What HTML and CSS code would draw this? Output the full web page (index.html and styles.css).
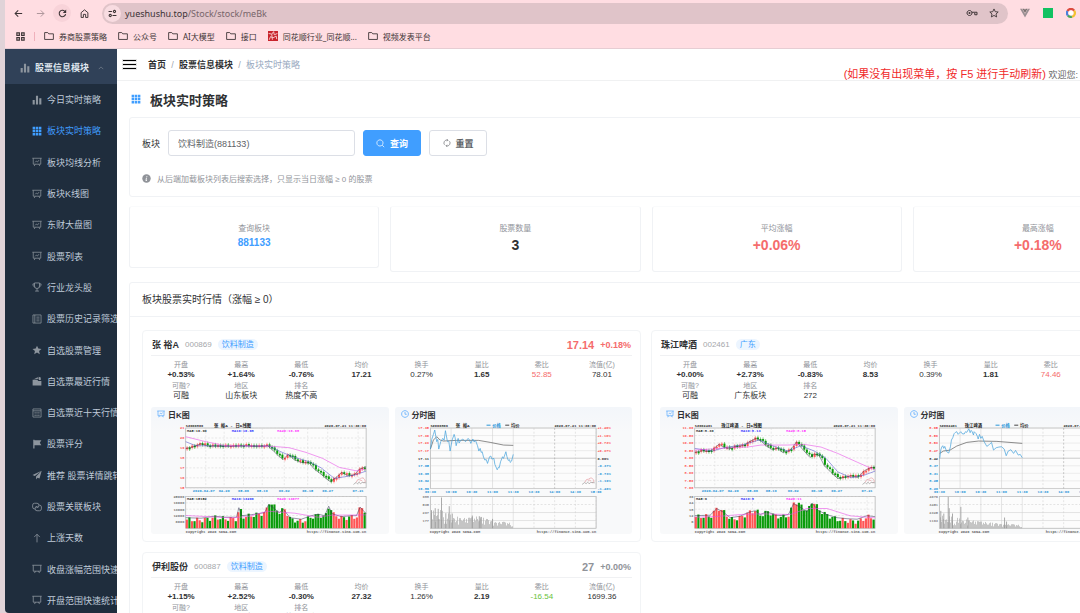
FILE: index.html
```html
<!DOCTYPE html>
<html lang="zh-CN">
<head>
    <meta charset="UTF-8">
    <meta name="viewport" content="width=device-width, initial-scale=1.0">
    <title>板块实时策略</title>
    <link rel="stylesheet" href="styles.css">
</head>
<body>
    <!-- 图标库 -->
    <svg class="sprite" aria-hidden="true">
        <symbol id="i-folder" viewBox="0 0 16 16"><path d="M1 13.500V2.500h5l1.600 2H15v9z" fill="none" stroke="currentColor" stroke-width="1.400" stroke-linejoin="round"/></symbol>
        <symbol id="i-bars" viewBox="0 0 16 16"><path d="M1 8h3.400v7H1zM6.300 1h3.400v14H6.300zM11.600 5H15v10h-3.400z" fill="currentColor"/></symbol>
        <symbol id="i-grid" viewBox="0 0 16 16"><path d="M1 1h4v4H1zM6 1h4v4H6zM11 1h4v4h-4zM1 6h4v4H1zM6 6h4v4H6zM11 6h4v4h-4zM1 11h4v4H1zM6 11h4v4H6zM11 11h4v4h-4z" fill="currentColor"/></symbol>
        <symbol id="i-board" viewBox="0 0 16 16"><path d="M.5 2h15M2 2v9.500h12V2M5 11.500l-1.500 3M11 11.500l1.500 3M5 8.500l2-2 1.700 1.500 2.500-3" fill="none" stroke="currentColor" stroke-width="1.200"/></symbol>
        <symbol id="i-plain" viewBox="0 0 16 16"><path d="M.5 2h15M2 2v9.500h12V2M5.500 11.500l-1.500 3M10.500 11.500l1.500 3" fill="none" stroke="currentColor" stroke-width="1.300"/></symbol>
        <symbol id="i-cup" viewBox="0 0 16 16"><path d="M4 1.500h8v5a4 4 0 0 1-8 0zM4 3H1.500c0 3 .8 4.500 3 5M12 3h2.500c0 3-.8 4.500-3 5M8 10.500v4M5 14.500h6" fill="none" stroke="currentColor" stroke-width="1.300"/></symbol>
        <symbol id="i-note" viewBox="0 0 16 16"><path d="M1.500 1.500h13v13h-13zM4.500 1.500v13M7 5h5M7 8h5M7 11h5" fill="none" stroke="currentColor" stroke-width="1.200"/></symbol>
        <symbol id="i-star" viewBox="0 0 16 16"><path d="M8 1l2.100 4.700 5.100.5-3.900 3.400 1.200 5L8 12l-4.500 2.600 1.200-5L.8 6.200l5.100-.5z" fill="currentColor"/></symbol>
        <symbol id="i-wallet" viewBox="0 0 16 16"><path d="M1 6h7.500L10 8h5v7H1zM3 5l6-3 1.500 2.500M10.500 1l3.500 1.500v4h-3z" fill="currentColor"/></symbol>
        <symbol id="i-date" viewBox="0 0 16 16"><path d="M1.500 1.500h13v13h-13zM1.500 4.500h13M4 7h2M7 7h2M10 7h2M4 9.500h2M7 9.500h2M10 9.500h2M4 12h2M7 12h2M10 12h2" fill="none" stroke="currentColor" stroke-width="1.200"/></symbol>
        <symbol id="i-flag" viewBox="0 0 16 16"><path d="M2 1h2v14H2zM4 2h11l-2.500 4L15 10H4z" fill="currentColor"/></symbol>
        <symbol id="i-send" viewBox="0 0 16 16"><path d="M15.500 1L.8 8l3.700 1.700zM15.500 1l-9 9.500V15l2.200-2.600 3.300 1.300z" fill="currentColor"/></symbol>
        <symbol id="i-link" viewBox="0 0 16 16"><path d="M5 11H4a3 3 0 0 1-3-3V5a3 3 0 0 1 3-3h4a3 3 0 0 1 3 3v1a3 3 0 0 1-3 3H7M11 5h1a3 3 0 0 1 3 3v3a3 3 0 0 1-3 3H8a3 3 0 0 1-3-3v-1a3 3 0 0 1 3-3h1" fill="none" stroke="currentColor" stroke-width="1.300"/></symbol>
        <symbol id="i-up" viewBox="0 0 16 16"><path d="M8 15V2M3.500 6.500L8 2l4.500 4.500" fill="none" stroke="currentColor" stroke-width="1.300"/></symbol>
        <symbol id="i-clock" viewBox="0 0 16 16"><path d="M8 1.200a6.800 6.800 0 1 0 .01 0zM8 4v4.500h3.500" fill="none" stroke="currentColor" stroke-width="1.300"/></symbol>
    </svg>

    <!-- 浏览器顶栏 -->
    <header class="browser">
        <div class="toolbar">
            <button class="nav-btn" aria-label="后退"><svg viewBox="0 0 16 16"><path d="M14.500 8H2M7.500 2.500L2 8l5.500 5.500" fill="none" stroke="currentColor" stroke-width="1.800"/></svg></button>
            <button class="nav-btn faded" aria-label="前进"><svg viewBox="0 0 16 16"><path d="M1.500 8H14M8.500 2.500L14 8l-5.500 5.500" fill="none" stroke="currentColor" stroke-width="1.600"/></svg></button>
            <button class="nav-btn round" aria-label="刷新"><svg viewBox="0 0 16 16"><path d="M13.500 9A5.700 5.700 0 1 1 12 4l1.500 1.500" fill="none" stroke="currentColor" stroke-width="1.900"/><path d="M14.500 1v6h-6z" fill="currentColor"/></svg></button>
            <button class="nav-btn" aria-label="主页"><svg viewBox="0 0 16 16"><path d="M2 15V6.500L8 1.500l6 5V15h-4V9.500H6V15z" fill="none" stroke="currentColor" stroke-width="1.700"/></svg></button>
            <div class="address">
                <span class="site-info"><svg viewBox="0 0 16 16"><path d="M1 4.500h6M8 11.500h7M11.500 2.500a2 2 0 1 0 .01 0zM4 9.500a2 2 0 1 0 .01 0z" fill="none" stroke="currentColor" stroke-width="1.900"/></svg></span>
                <span class="url">yueshushu.top<em>/Stock/stock/meBk</em></span>
                <svg class="key" viewBox="0 0 24 16"><path d="M7 3a5 5 0 1 0 .01 0zM12 6.500h10v5h-4.500V8" fill="none" stroke="currentColor" stroke-width="2"/><circle cx="7" cy="8" r="2" fill="currentColor"/></svg>
                <svg viewBox="0 0 16 16"><path d="M8 1.500l2 4.400 4.700.5-3.500 3.200 1 4.700L8 11.900l-4.200 2.400 1-4.700L1.300 6.400 6 5.900z" fill="none" stroke="currentColor" stroke-width="1.400"/></svg>
            </div>
            <div class="extensions">
                <svg viewBox="0 0 16 16"><path d="M0 1h3.500L8 9l4.500-8H16L8 15z" fill="#9b9093"/><path d="M4 1h3l1 2 1-2h3L8 8z" fill="#77706f"/></svg>
                <span class="ext-green"></span>
                <svg viewBox="0 0 16 16" fill="none" stroke-width="3.500"><path d="M2.300 4.800A6.200 6.200 0 0 1 13 4.200" stroke="#dc4b3e"/><path d="M13 4.200A6.200 6.200 0 0 1 9.500 14" stroke="#f2c230"/><path d="M9.500 14A6.200 6.200 0 0 1 3 12" stroke="#49a75a"/><path d="M3 12a6.200 6.200 0 0 1-.7-7.200" stroke="#4a80dc"/><circle cx="8" cy="8" r="3.600" fill="#fff"/></svg>
            </div>
        </div>
        <nav class="bookmarks">
            <svg class="apps" viewBox="0 0 16 16"><path d="M1.500 1.500h4.500v4.500H1.500zM10 1.500h4.500v4.500H10zM1.500 10h4.500v4.500H1.500zM10 10h4.500v4.500H10z" fill="none" stroke="currentColor" stroke-width="2"/></svg>
            <span class="divider"></span>
            <a href="#"><svg><use href="#i-folder"/></svg>券商股票策略</a>
            <a href="#"><svg><use href="#i-folder"/></svg>公众号</a>
            <a href="#"><svg><use href="#i-folder"/></svg>AI大模型</a>
            <a href="#"><svg><use href="#i-folder"/></svg>接口</a>
            <a href="#"><svg viewBox="0 0 16 16"><rect width="16" height="16" fill="#c9242c"/><path d="M1 4l5 1 3-4 1 5 5-2M2 14l2-5 4 2 5-3 1 5M6 5l1 9" fill="none" stroke="#f6cfd0" stroke-width="1.500"/></svg>同花顺行业_同花顺...</a>
            <a href="#"><svg><use href="#i-folder"/></svg>视频发表平台</a>
        </nav>
    </header>

    <div class="app">
        <!-- 侧边菜单 -->
        <aside class="sidebar">
            <button class="menu-title">
                <svg><use href="#i-bars"/></svg><span>股票信息模块</span>
                <svg class="arrow" viewBox="0 0 16 16"><path d="M2 11l6-6 6 6" fill="none" stroke="currentColor" stroke-width="1.500"/></svg>
            </button>
            <ul class="submenu">
                <li><a href="#"><svg><use href="#i-bars"/></svg>今日实时策略</a></li>
                <li><a href="#" class="active"><svg><use href="#i-grid"/></svg>板块实时策略</a></li>
                <li><a href="#"><svg><use href="#i-board"/></svg>板块均线分析</a></li>
                <li><a href="#"><svg><use href="#i-board"/></svg>板块K线图</a></li>
                <li><a href="#"><svg><use href="#i-board"/></svg>东财大盘图</a></li>
                <li><a href="#"><svg><use href="#i-board"/></svg>股票列表</a></li>
                <li><a href="#"><svg><use href="#i-cup"/></svg>行业龙头股</a></li>
                <li><a href="#"><svg><use href="#i-note"/></svg>股票历史记录筛选</a></li>
                <li><a href="#"><svg><use href="#i-star"/></svg>自选股票管理</a></li>
                <li><a href="#"><svg><use href="#i-wallet"/></svg>自选票最近行情</a></li>
                <li><a href="#"><svg><use href="#i-date"/></svg>自选票近十天行情</a></li>
                <li><a href="#"><svg><use href="#i-flag"/></svg>股票评分</a></li>
                <li><a href="#"><svg><use href="#i-send"/></svg>推荐 股票详情跳转</a></li>
                <li><a href="#"><svg><use href="#i-link"/></svg>股票关联板块</a></li>
                <li><a href="#"><svg><use href="#i-up"/></svg>上涨天数</a></li>
                <li><a href="#"><svg><use href="#i-plain"/></svg>收盘涨幅范围快速</a></li>
                <li><a href="#"><svg><use href="#i-plain"/></svg>开盘范围快速统计</a></li>
            </ul>
        </aside>

        <main class="main">
            <div class="navbar">
                <button class="hamburger" aria-label="折叠菜单"><i></i><i></i><i></i></button>
                <nav class="breadcrumb">
                    <a href="#">首页</a><span>/</span><a href="#">股票信息模块</a><span>/</span><em>板块实时策略</em>
                </nav>
                <div class="notice"><strong>(如果没有出现菜单，按 F5 进行手动刷新)</strong> 欢迎您:</div>
            </div>

            <div class="content">
                <h1 class="page-title"><svg><use href="#i-grid"/></svg>板块实时策略</h1>

                <!-- 查询条件 -->
                <section class="panel search">
                    <form class="search-row">
                        <label for="plate">板块</label>
                        <input id="plate" type="text" value="饮料制造(881133)">
                        <button type="button" class="btn primary"><svg viewBox="0 0 16 16"><path d="M7 1.500a5.500 5.500 0 1 0 .01 0zM11 11l3.500 3.500" fill="none" stroke="currentColor" stroke-width="1.300"/></svg>查询</button>
                        <button type="button" class="btn"><svg viewBox="0 0 16 16"><path d="M3 11.500A6 6 0 0 1 8 2l2 .5M13 4.500A6 6 0 0 1 8 14l-2-.5M8 .5L10 2.500 8 4.500M8 11.500l-2 2 2 2" fill="none" stroke="currentColor" stroke-width="1.300"/></svg>重置</button>
                    </form>
                    <p class="hint"><svg viewBox="0 0 16 16"><circle cx="8" cy="8" r="7.500" fill="#909399"/><path d="M8.800 3.500l-.3 1.500M8 6.500l-1 5.500 2-1" fill="none" stroke="#fff" stroke-width="1.600"/></svg>从后端加载板块列表后搜索选择，只显示当日涨幅 ≥ 0 的股票</p>
                </section>

                <!-- 汇总 -->
                <section class="stats">
                    <div class="stat panel"><span>查询板块</span><b class="code">881133</b></div>
                    <div class="stat panel"><span>股票数量</span><b>3</b></div>
                    <div class="stat panel"><span>平均涨幅</span><b class="red">+0.06%</b></div>
                    <div class="stat panel"><span>最高涨幅</span><b class="red">+0.18%</b></div>
                </section>

                <!-- 行情列表 -->
                <section class="panel quotes">
                    <h2>板块股票实时行情（涨幅 ≥ 0）</h2>
                    <div class="stock-list">
                        <article class="stock">
                            <div class="stock-head">
                                <h3>张 裕A</h3><span class="num">000869</span><span class="tag">饮料制造</span>
                                <b class="price red">17.14</b><b class="pct red">+0.18%</b>
                            </div>
                            <div class="metrics">
                                <div><span>开盘</span><b>+0.53%</b></div>
                                <div><span>最高</span><b>+1.64%</b></div>
                                <div><span>最低</span><b>-0.76%</b></div>
                                <div><span>均价</span><b>17.21</b></div>
                                <div><span>换手</span><i>0.27%</i></div>
                                <div><span>量比</span><b>1.65</b></div>
                                <div><span>委比</span><i class="red">52.85</i></div>
                                <div><span>流值(亿)</span><i>78.01</i></div>
                                <div><span>可融?</span><i>可融</i></div>
                                <div><span>地区</span><i>山东板块</i></div>
                                <div><span>排名</span><i>热度不高</i></div>
                            </div>
                            <div class="charts">
                                <div class="chart"><h4><svg><use href="#i-board"/></svg>日K图</h4><svg id="k1" viewBox="0 0 711 339"></svg></div>
                                <div class="chart"><h4><svg><use href="#i-clock"/></svg>分时图</h4><svg id="t1" viewBox="0 0 711 339"></svg></div>
                            </div>
                        </article>

                        <article class="stock">
                            <div class="stock-head">
                                <h3>珠江啤酒</h3><span class="num">002461</span><span class="tag">广东</span>
                                <b class="price">8.42</b><b class="pct">+0.00%</b>
                            </div>
                            <div class="metrics">
                                <div><span>开盘</span><b>+0.00%</b></div>
                                <div><span>最高</span><b>+2.73%</b></div>
                                <div><span>最低</span><b>-0.83%</b></div>
                                <div><span>均价</span><b>8.53</b></div>
                                <div><span>换手</span><i>0.39%</i></div>
                                <div><span>量比</span><b>1.81</b></div>
                                <div><span>委比</span><i class="red">74.46</i></div>
                                <div><span>流值(亿)</span><i>186.36</i></div>
                                <div><span>可融?</span><i>可融</i></div>
                                <div><span>地区</span><i>广东板块</i></div>
                                <div><span>排名</span><i>272</i></div>
                            </div>
                            <div class="charts">
                                <div class="chart"><h4><svg><use href="#i-board"/></svg>日K图</h4><svg id="k2" viewBox="0 0 711 339"></svg></div>
                                <div class="chart"><h4><svg><use href="#i-clock"/></svg>分时图</h4><svg id="t2" viewBox="0 0 711 339"></svg></div>
                            </div>
                        </article>

                        <article class="stock">
                            <div class="stock-head">
                                <h3>伊利股份</h3><span class="num">600887</span><span class="tag">饮料制造</span>
                                <b class="price">27</b><b class="pct">+0.00%</b>
                            </div>
                            <div class="metrics">
                                <div><span>开盘</span><b>+1.15%</b></div>
                                <div><span>最高</span><b>+2.52%</b></div>
                                <div><span>最低</span><b>-0.30%</b></div>
                                <div><span>均价</span><b>27.32</b></div>
                                <div><span>换手</span><i>1.26%</i></div>
                                <div><span>量比</span><b>2.19</b></div>
                                <div><span>委比</span><i class="green">-16.54</i></div>
                                <div><span>流值(亿)</span><i>1699.36</i></div>
                                <div><span>可融?</span><i>可融</i></div>
                                <div><span>地区</span><i>内蒙古</i></div>
                                <div><span>排名</span><i>热度不高</i></div>
                            </div>
                        </article>
                    </div>
                </section>
            </div>
        </main>
    </div>

    <script src="charts.js"></script>
</body>
</html>
```

FILE: styles.css
```css
* {
    box-sizing: border-box;
}

body {
    margin: 0;
    height: 100vh;
    display: flex;
    flex-direction: column;
    overflow: hidden;
    padding-left: 5px;
    background: #e0d3d8;
    font-family: "Liberation Sans", "Noto Sans CJK SC", sans-serif;
    font-size: 9px;
    color: #303133;
}

h1, h2, h3, h4, p, ul {
    margin: 0;
    padding: 0;
}

ul {
    list-style: none;
}

a {
    color: inherit;
    text-decoration: none;
}

em, i {
    font-style: normal;
}

button, input {
    font: inherit;
    color: inherit;
}

svg {
    flex: none;
    width: 10px;
    height: 10px;
}

.sprite {
    position: absolute;
    width: 0;
    height: 0;
}

.red {
    color: #f56c6c !important;
}

.green {
    color: #67c23a !important;
}

/* 浏览器顶栏 */
.browser {
    flex: none;
    background: #ffdde2;
    border-bottom: 1px solid #e6cdd3;
    color: #3c3335;
    font-family: "Noto Sans", "Noto Sans CJK SC", sans-serif;
}

.toolbar {
    display: flex;
    align-items: center;
    gap: 4px;
    height: 24px;
    padding: 2px 4px 0;
}

.nav-btn {
    display: flex;
    align-items: center;
    justify-content: center;
    width: 18px;
    height: 18px;
    padding: 0;
    border: 0;
    border-radius: 9px;
    background: none;
}

.nav-btn svg {
    width: 9px;
    height: 9px;
}

.nav-btn.faded {
    color: #a68e94;
}

.nav-btn.round {
    background: #f8d3d9;
}

.address {
    flex: 1;
    display: flex;
    align-items: center;
    gap: 11px;
    height: 21px;
    margin-left: 5px;
    padding: 0 9px 0 2px;
    border-radius: 11px;
    background: #e0c4c9;
}

.site-info {
    display: flex;
    align-items: center;
    justify-content: center;
    width: 17px;
    height: 17px;
    border-radius: 9px;
    background: #f8dce1;
}

.site-info svg {
    width: 9px;
    height: 9px;
}

.url {
    flex: 1;
    margin-left: -7px;
}

.url em {
    color: #77656a;
}

.address .key {
    width: 12px;
    height: 8px;
}

.extensions {
    display: flex;
    align-items: center;
    gap: 13px;
    padding-left: 8px;
}

.ext-green {
    width: 10px;
    height: 10px;
    background: #12c161;
}

.bookmarks {
    display: flex;
    align-items: center;
    gap: 11px;
    height: 24px;
    padding-left: 11px;
    font-size: 8px;
    white-space: nowrap;
}

.bookmarks a {
    display: flex;
    align-items: center;
    gap: 5px;
}

.bookmarks .apps {
    width: 9px;
    height: 9px;
}

.divider {
    width: 1px;
    height: 9px;
    margin: 0 -2px;
    background: #f0b0bb;
}

.app {
    flex: 1;
    display: flex;
    min-height: 0;
}

/* 侧边菜单 */
.sidebar {
    flex: none;
    display: flex;
    flex-direction: column;
    width: 112px;
    overflow: hidden;
    border-bottom-left-radius: 4px;
    background: #1f2d3d;
    color: #bfcbd9;
    white-space: nowrap;
}

.sidebar svg {
    color: #8d959e;
}

.menu-title {
    flex: none;
    display: flex;
    align-items: center;
    gap: 5px;
    height: 35px;
    padding: 2px 13px 0 15px;
    border: 0;
    background: #304158;
    color: #dfe6ee;
    font-weight: bold;
}

.menu-title .arrow {
    width: 6px;
    height: 6px;
    margin-left: auto;
}

.submenu {
    flex: 1;
    display: flex;
    flex-direction: column;
    margin-bottom: -3px;
}

.submenu li {
    flex: 1;
    display: flex;
}

.submenu a {
    display: flex;
    align-items: center;
    gap: 5px;
    padding-left: 27px;
}

.submenu .active,
.submenu .active svg {
    color: #409eff;
}

/* 主区域 */
.main {
    flex: 1;
    min-width: 0;
    overflow: hidden;
    background: #fff;
}

.navbar {
    display: flex;
    align-items: center;
    height: 32px;
    padding: 0 2px 0 6px;
    border-bottom: 1px solid #f0f1f2;
}

.hamburger {
    display: flex;
    flex-direction: column;
    gap: 3px;
    width: 13px;
    padding: 0;
    border: 0;
    background: none;
}

.hamburger i {
    height: 1px;
    background: #000;
    box-shadow: 0 0 0 1px #9994;
}

.breadcrumb {
    display: flex;
    align-items: center;
    margin-left: 12px;
    font-weight: bold;
}

.breadcrumb span {
    width: 13px;
    text-align: center;
    font-weight: normal;
    color: #a0a6b0;
}

.breadcrumb em {
    font-weight: normal;
    color: #97a8be;
}

.notice {
    margin-left: auto;
    padding-top: 16px;
    color: #666;
    white-space: nowrap;
}

.notice strong {
    font-size: 11px;
    font-weight: normal;
    color: #f02a2a;
}

/* 内容比窄窗口宽, 多出部分被裁掉 */
.content {
    min-width: 1058px;
    padding: 8px 12px 12px;
}

.page-title {
    display: flex;
    align-items: center;
    gap: 9px;
    height: 20px;
    padding-left: 2px;
    font-size: 13px;
}

.page-title svg {
    color: #409eff;
}

.panel {
    border: 1px solid #f0f2f5;
    border-radius: 3px;
    background: #fff;
}

.search {
    margin-top: 8px;
    padding: 12px;
}

.search-row {
    display: flex;
    align-items: center;
    gap: 8px;
}

.search input {
    width: 187px;
    height: 26px;
    padding: 0 9px;
    border: 1px solid #dcdfe6;
    border-radius: 3px;
    color: #606266;
}

.btn {
    display: flex;
    align-items: center;
    justify-content: center;
    gap: 5px;
    width: 58px;
    height: 26px;
    padding: 0;
    border: 1px solid #dcdfe6;
    border-radius: 3px;
    background: #fff;
    color: #606266;
    font-weight: bold;
}

.btn svg {
    width: 8px;
    height: 8px;
}

.btn.primary {
    border-color: #409eff;
    background: #409eff;
    color: #fff;
}

.btn.primary svg {
    width: 9px;
    height: 9px;
}

.hint {
    display: flex;
    align-items: center;
    gap: 6px;
    height: 12px;
    margin-top: 16px;
    font-size: 8px;
    color: #909399;
}

.hint svg {
    width: 9px;
    height: 9px;
}

.stats {
    display: grid;
    grid-template-columns: repeat(4, 1fr);
    align-items: start;
    gap: 11px;
    margin: 9px 0 10px;
}

.stat {
    padding: 16px 0;
    text-align: center;
    border-top-color: #fafbfc;
}

.stat span,
.stat b {
    display: block;
}

.stat span {
    line-height: 12px;
    font-size: 8px;
    color: #909399;
}

.stat b {
    line-height: 20px;
    font-size: 14px;
}

.stat .code {
    line-height: 16px;
    font-size: 10px;
    color: #409eff;
}

.quotes h2 {
    height: 34px;
    padding-left: 12px;
    border-bottom: 1px solid #f0f2f5;
    line-height: 33px;
    font-size: 10px;
    font-weight: normal;
}

.stock-list {
    display: grid;
    grid-template-columns: 1fr 1fr;
    gap: 10px;
    padding: 13px 12px;
}

/* 股票卡片 */
.stock {
    padding: 3px 8px 7px;
    border: 1px solid #f2f4f6;
    border-radius: 4px;
}

.stock-head {
    display: flex;
    align-items: center;
    gap: 6px;
    height: 22px;
    padding: 0 1px;
    border-bottom: 1px solid #f0f1f3;
}

.stock-head h3 {
    font-size: 9px;
}

.num {
    font-size: 8px;
    color: #a5a7ab;
}

.tag {
    padding: 0 4px;
    border-radius: 6px;
    background: #ecf5ff;
    line-height: 11px;
    font-size: 8px;
    color: #409eff;
}

.price {
    margin-left: auto;
    font-size: 11px;
    color: #909399;
}

.pct {
    color: #909399;
}

.metrics {
    display: grid;
    grid-template-columns: repeat(8, 1fr);
    row-gap: 1px;
    padding: 4px 0 6px;
    text-align: center;
}

.metrics span,
.metrics b,
.metrics i {
    display: block;
    height: 10px;
    line-height: 10px;
    font-size: 8px;
}

.metrics span {
    font-size: 7px;
    color: #909399;
}

.charts {
    display: grid;
    grid-template-columns: 1fr 1fr;
    gap: 6px;
}

.chart {
    border-radius: 3px;
    background: linear-gradient(#f3f6fa, #f8f9fa 20%);
}

.chart h4 {
    display: flex;
    align-items: center;
    gap: 3px;
    height: 14px;
    padding-left: 6px;
    font-size: 8px;
}

.chart h4 svg {
    width: 8px;
    height: 8px;
    color: #409eff;
}

.chart > svg {
    display: block;
    width: 100%;
    height: auto;
    font-family: "Liberation Mono", "Noto Sans CJK SC", monospace;
    font-size: 11px;
    font-weight: bold;
}
```

FILE: charts.js
```js
const RED = '#f55', GREEN = '#0a9b0a', BLUE = '#2a96d8', GRID = '#d4d4d4';

function line(x1, y1, x2, y2, color, dash) {
    return `<path d="M${x1} ${y1}L${x2} ${y2}" stroke="${color}" stroke-width="1.5" fill="none"${dash ? ' stroke-dasharray="6 5"' : ''}/>`;
}

function rect(x, y, w, h, color) {
    return `<rect x="${x}" y="${y}" width="${w}" height="${h}" fill="${color}"/>`;
}

function frame(x, y, w, h) {
    return `<rect x="${x}" y="${y}" width="${w}" height="${h}" fill="#fcfcfc" stroke="#aaa" stroke-width="2"/>`;
}

function text(x, y, s, color, anchor, size) {
    return `<text x="${x}" y="${y}" fill="${color || '#333'}" text-anchor="${anchor || 'start'}"${size ? ` font-size="${size}"` : ''}>${s}</text>`;
}

function poly(points, color, width) {
    return `<polyline points="${points.map(p => p.join(',')).join(' ')}" fill="none" stroke="${color}" stroke-width="${width || 2}"/>`;
}

// 折线上任意 x 的插值
function at(points, x) {
    for (let i = 1; i < points.length; i++) {
        if (x <= points[i][0]) {
            const [x0, y0] = points[i - 1], [x1, y1] = points[i];
            return y0 + (y1 - y0) * (x - x0) / (x1 - x0);
        }
    }
    return points[points.length - 1][1];
}

function logo(x, y) {
    return `<path d="M${x} ${y}q4-12 12-10 8-8 14 2 4 8-4 9M${x + 10} ${y - 4}q4-6 9 0" fill="none" stroke="#e79aa0" stroke-width="2"/>` +
        `<path d="M${x - 8} ${y + 6}l8-6 4 4 5-5 4 5 5-4 12 1" fill="none" stroke="#999" stroke-width="2"/>`;
}

function footer(right) {
    return text(104, 335, 'Copyright 2026 SINA.COM', '#666') +
        text(right, 335, 'https://finance.sina.com.cn', '#666', 'end');
}

function drawK(id, c) {
    const L = 104, R = 644, n = 70, step = (R - L) / n;
    let s = frame(L, 21, 540, 179) + frame(L, 226, 540, 95);
    c.yLabels.forEach((v, i) => {
        const y = 21 + 179 * i / (c.yLabels.length - 1);
        s += line(L, y, R, y, GRID, true) + text(L - 4, y + 4, v, RED, 'end');
    });
    c.volLabels.forEach((v, i) => {
        const y = 226 + 19 * i;
        s += line(L, y, R, y, GRID, true) + text(L - 4, y + 4, v, '#777', 'end');
    });
    [164, 219, 277, 333, 399, 469, 529, 620].forEach((x, i) => {
        s += line(x, 21, x, 200, GRID, true) + line(x, 226, x, 321, GRID, true);
        const d = ['2026-04-07', '04-20', '05-06', '05-19', '06-02', '06-15', '06-27', '07-21'][i];
        s += text(x - (i ? 0 : 6), 214, d, BLUE, 'middle');
    });
    for (let i = 0; i < n; i++) {
        const x = L + step * i + 1;
        const y = at(c.price, x) + Math.sin(i * 2.4) * 3;
        const prev = i ? at(c.price, x - step) + Math.sin((i - 1) * 2.4) * 3 : y + 5;
        const top = Math.min(y, prev), h = Math.max(5, Math.abs(y - prev));
        const color = y <= prev ? RED : GREEN;
        s += line(x + 3, top - 5, x + 3, top + h + 5, color) + rect(x, top, 6, h, color);
        const vh = Math.max(10, at(c.vol, x) + Math.sin(i * 1.9) * 7);
        s += rect(x - 1, 321 - vh, 6.5, vh, color);
    }
    s += poly(c.price.map(p => [p[0], p[1] + 2]), '#334', 1.5);
    s += poly(c.ma10, '#55c', 1.7) + poly(c.ma20, '#e64de6', 1.7);
    s += poly(c.vol.map(p => [p[0], 321 - p[1] * .75 - 12]), '#335', 1.5);
    s += poly(c.volMa, '#e64de6', 1.7);
    s += text(L, 17, c.code) + text(244, 17, c.title, '#222', 'middle', 13) + text(R, 17, '2026-07-21 11:30:00', '#333', 'end');
    s += text(108, 32, c.ma[0]) + text(242, 32, c.ma[1], '#33f') + text(378, 32, c.ma[2], '#f3f');
    s += text(108, 237, c.mv[0]) + text(242, 237, c.mv[1], '#33f') + text(378, 237, c.mv[2], '#f3f');
    s += logo(614, 184) + footer(R);
    document.getElementById(id).innerHTML = s;
}

function drawTime(id, c) {
    const L = 106, R = 602;
    let s = frame(L, 21, 496, 181) + frame(L, 226, 496, 95);
    c.left.forEach((v, i) => {
        const y = 21 + 22.6 * i;
        const color = i < 4 ? RED : i > 4 ? BLUE : '#333';
        s += line(L, y, R, y, i === 4 ? '#999' : '#ddd');
        s += text(L - 4, y + 4, v, color, 'end') + text(R + 4, y + 4, c.right[i], color);
    });
    c.volLabels.forEach((v, i) => {
        const y = 226 + 24 * i;
        s += line(L, y, R, y, '#ccc', i === 1) + text(L - 4, y + 4, v, '#888', 'end');
    });
    ['09:30', '10:00', '10:30', '11:00', '11:30', '13:30', '14:00', '14:30', '15:00'].forEach((t, i) => {
        const x = L + 62 * i;
        s += line(x, 21, x, 202, i === 6 ? '#999' : '#ccc', i > 4) + line(x, 226, x, 321, '#ccc', i > 4);
        s += text(x, 216, t, BLUE, 'middle');
    });
    for (let x = L + 2; x < 354; x += 3) {
        const h = at(c.vol, x) * (.25 + .75 * Math.abs(Math.sin(x * x * .37)));
        s += rect(x, 321 - h, 2, h, '#aaa');
    }
    c.spikes.forEach(p => s += rect(p[0], 321 - p[1], 2.5, p[1], '#999'));
    s += poly(c.avg, '#555') + poly(c.price, '#4aa3dc', 2.2);
    s += text(L, 17, c.code) + text(182, 17, c.name, '#222', 'start', 13);
    s += rect(274, 11, 12, 3, BLUE) + text(291, 17, '价格', BLUE, 'start', 13);
    s += rect(330, 11, 12, 3, '#444') + text(347, 17, '均价', '#333', 'start', 13);
    s += text(R, 17, '2026-07-21 11:30:00', '#333', 'end') + logo(568, 184) + footer(R);
    document.getElementById(id).innerHTML = s;
}

drawK('k1', {
    code: 'SZ000869', title: '张 裕A - 日K线图',
    ma: ['MA5:16.90', 'MA10:16.68', 'MA20:16.68'],
    mv: ['MA5:15152', 'MA10:13206', 'MA20:13677'],
    yLabels: [21, 20, 19, 18, 17, 16, 15],
    volLabels: [25000, 19000, 13000, 12000, 6000],
    price: [[104, 80], [124, 76], [149, 66], [169, 73], [234, 74], [284, 72], [319, 75], [349, 72], [364, 85], [384, 105], [396, 113], [411, 98], [429, 114], [449, 122], [474, 124], [489, 142], [509, 157], [524, 170], [537, 180], [554, 167], [571, 152], [589, 162], [609, 159], [624, 142], [644, 135]],
    ma10: [[104, 62], [134, 74], [234, 75], [354, 75], [384, 90], [424, 107], [474, 122], [509, 140], [549, 172], [579, 167], [609, 162], [644, 150]],
    ma20: [[104, 47], [164, 62], [224, 74], [354, 75], [414, 80], [464, 94], [514, 112], [564, 139], [614, 149], [644, 144]],
    vol: [[104, 26], [150, 24], [190, 32], [220, 28], [256, 28], [263, 66], [272, 34], [300, 38], [340, 46], [352, 78], [364, 68], [384, 46], [396, 60], [416, 26], [450, 20], [480, 34], [500, 40], [520, 34], [532, 72], [542, 42], [570, 30], [600, 34], [615, 34], [626, 68], [644, 42]],
    volMa: [[104, 283], [240, 290], [290, 286], [350, 270], [430, 276], [500, 288], [540, 282], [644, 281]]
});

drawK('k2', {
    code: 'SZ002461', title: '珠江啤酒 - 日K线图',
    ma: ['MA5:8.30', 'MA10:8.13', 'MA20:8.15'],
    mv: ['MA5:9', 'MA10:8', 'MA20:11'],
    yLabels: ['11.00', '10.50', '10.00', '9.50', '9.00', '8.50', '8.00', '7.50', '7.00'],
    volLabels: [30, 24, 18, 12, 6],
    price: [[104, 92], [127, 87], [147, 90], [162, 80], [177, 67], [192, 77], [207, 82], [227, 74], [252, 72], [267, 60], [287, 50], [302, 57], [317, 72], [337, 84], [352, 80], [367, 92], [387, 87], [399, 74], [409, 60], [422, 77], [437, 94], [449, 107], [462, 97], [477, 102], [492, 132], [512, 152], [532, 170], [552, 167], [572, 162], [592, 167], [612, 147], [632, 137], [644, 136]],
    ma10: [[104, 82], [157, 90], [192, 80], [252, 70], [297, 57], [337, 74], [382, 90], [422, 74], [462, 90], [497, 112], [532, 152], [572, 170], [612, 162], [644, 150]],
    ma20: [[104, 87], [212, 80], [262, 78], [302, 72], [382, 72], [432, 70], [482, 78], [532, 97], [592, 124], [644, 147]],
    vol: [[104, 34], [150, 36], [170, 62], [190, 48], [210, 26], [240, 32], [262, 46], [285, 54], [300, 38], [320, 50], [345, 36], [370, 34], [385, 40], [400, 82], [425, 64], [440, 50], [455, 84], [475, 54], [500, 38], [530, 26], [560, 22], [590, 20], [620, 34], [644, 30]],
    volMa: [[104, 288], [170, 286], [240, 280], [300, 278], [390, 280], [440, 262], [500, 262], [570, 284], [644, 290]]
});

drawTime('t1', {
    code: 'SZ000869', name: '张 裕A',
    left: ['17.35', '17.30', '17.23', '17.17', '17.11', '17.05', '16.98', '16.92', '16.86'],
    right: ['+1.46%', '+1.10%', '+0.73%', '+0.37%', '0.00%', '-0.37%', '-0.73%', '-1.10%', '-1.46%'],
    volLabels: ['988', '535', '297', '177'],
    price: [[106, 84], [110, 55], [115, 40], [119, 27], [122, 45], [125, 62], [128, 55], [131, 84], [137, 62], [143, 52], [147, 58], [151, 29], [157, 62], [161, 60], [165, 90], [171, 57], [177, 40], [180, 50], [183, 74], [189, 52], [192, 66], [195, 60], [203, 54], [211, 62], [219, 52], [223, 57], [227, 67], [233, 54], [237, 63], [241, 58], [247, 74], [251, 90], [255, 82], [258, 94], [261, 92], [265, 108], [269, 117], [273, 115], [277, 127], [283, 107], [287, 105], [290, 114], [296, 112], [299, 130], [306, 146], [310, 138], [312, 140], [316, 122], [322, 107], [325, 112], [332, 92], [335, 106], [339, 118], [343, 116], [345, 124], [349, 120], [354, 100]],
    avg: [[106, 84], [115, 57], [125, 47], [135, 57], [145, 60], [185, 58], [250, 58], [285, 64], [325, 72], [354, 73]],
    vol: [[106, 55], [135, 55], [165, 42], [200, 30], [250, 36], [300, 22], [354, 16]],
    spikes: [[108, 54], [119, 60], [128, 58], [138, 92], [151, 45], [161, 66], [170, 44], [230, 38], [251, 36], [256, 34], [291, 28]]
});

drawTime('t2', {
    code: 'SZ002461', name: '珠江啤酒',
    left: ['8.65', '8.59', '8.53', '8.47', '8.42', '8.37', '8.31', '8.25', '8.20'],
    right: ['+2.73%', '+2.05%', '+1.37%', '+0.68%', '0.00%', '-0.68%', '-1.37%', '-2.05%', '-2.73%'],
    volLabels: ['4676', '3451', '2325', '1163'],
    price: [[107, 112], [110, 87], [113, 78], [116, 74], [119, 82], [122, 76], [128, 92], [134, 96], [139, 77], [142, 57], [146, 50], [150, 38], [154, 34], [158, 32], [162, 40], [170, 32], [174, 38], [180, 39], [184, 32], [188, 34], [194, 23], [198, 35], [201, 28], [204, 32], [208, 42], [210, 32], [216, 38], [220, 47], [222, 54], [226, 40], [230, 52], [234, 46], [240, 62], [248, 76], [256, 70], [262, 64], [268, 87], [276, 80], [284, 78], [292, 77], [300, 84], [306, 104], [312, 90], [320, 86], [328, 97], [334, 88], [342, 102], [348, 100], [354, 110]],
    avg: [[107, 97], [118, 90], [138, 87], [158, 75], [188, 64], [223, 60], [278, 61], [354, 67]],
    vol: [[106, 40], [135, 36], [165, 30], [200, 24], [250, 18], [300, 14], [354, 10]],
    spikes: [[109, 52], [118, 44], [131, 94], [134, 60], [144, 44], [169, 64], [190, 32], [300, 32], [306, 20]]
});
```
